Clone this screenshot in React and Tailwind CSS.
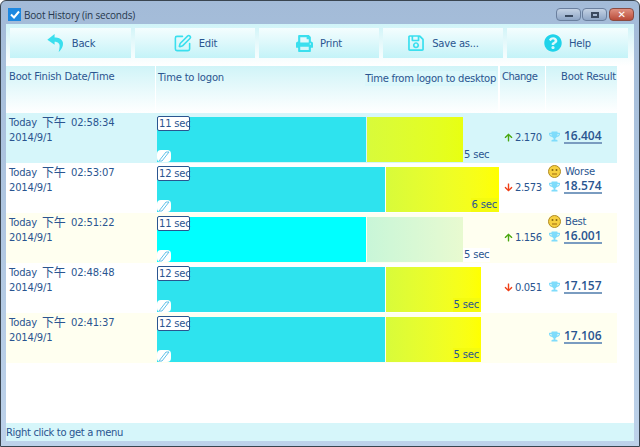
import React from "react";
import { FaTrophy, FaArrowUp, FaArrowDown, FaQuestionCircle, FaPrint, FaRegSave } from "react-icons/fa";
import { SquarePen } from "lucide-react";

const BackIcon = () => (
  <svg width="19" height="20" viewBox="0 0 20 22" className="text-[#3adfee]">
    <path d="M9 1 L1 7.5 L9 13 L9 9.5 C13 9.5 15 12 14.5 15 C14.2 17 14 19 13.5 21 C17 18 19 14 18 10 C17 6.5 13 5 9 5 Z" fill="currentColor" />
  </svg>
);

const Smiley = () => (
  <svg width="13" height="13" viewBox="0 0 13 13" className="shrink-0">
    <circle cx="6.5" cy="6.5" r="6" fill="#f6d040" stroke="#b08a20" />
    <circle cx="4.5" cy="5" r="1" fill="#8a6a10" />
    <circle cx="8.5" cy="5" r="1" fill="#8a6a10" />
    <path d="M4 9 H9" stroke="#a06a10" />
  </svg>
);

const Corner = () => (
  <div className="absolute left-0 bottom-0 w-[14px] h-[12px] bg-white rounded-sm flex items-center justify-center">
    <svg width="12" height="11" viewBox="0 0 12 11">
      <path d="M1 10 L8 1 M4 10 L11 1 M1 10 H4 M8 1 H11" stroke="#60c0e8" strokeWidth="1" fill="none" />
    </svg>
  </div>
);

const toolbar = [
  { label: "Back", icon: <BackIcon />, w: "w-[121px]" },
  { label: "Edit", icon: <SquarePen size={19} strokeWidth={2} className="text-[#3adfee]" />, w: "w-[120px]" },
  { label: "Print", icon: <FaPrint size={17} className="text-[#3adfee]" />, w: "w-[120px]" },
  { label: "Save as...", icon: <FaRegSave size={18} className="text-[#3adfee]" />, w: "w-[120px]" },
  { label: "Help", icon: <FaQuestionCircle size={18} className="text-[#1fd3ea]" />, w: "w-[121px]" },
];

const rows = [
  { time: "02:58:34", bg: "bg-[#d6f6fa]", logon: "11 sec", a: 209, b: 96, desk: "5 sec", inside: false, change: "2.170", up: true, score: "16.404", cyan: "bg-[#2ee3ee]", grad: "bg-gradient-to-r from-[#d8fb3a] to-[#e8ff10]" },
  { time: "02:53:07", bg: "bg-white", logon: "12 sec", a: 228, b: 113, desk: "6 sec", inside: true, change: "2.573", up: false, score: "18.574", note: "Worse", cyan: "bg-[#2ee3ee]", grad: "bg-gradient-to-r from-[#d8fb3a] to-[#ffff00]" },
  { time: "02:51:22", bg: "bg-[#fffff0]", logon: "11 sec", a: 209, b: 96, desk: "5 sec", inside: false, white: true, change: "1.156", up: true, score: "16.001", note: "Best", cyan: "bg-[#00ffff]", grad: "bg-gradient-to-r from-[#c8f6d8] to-[#e8fad0]" },
  { time: "02:48:48", bg: "bg-white", logon: "12 sec", a: 228, b: 95, desk: "5 sec", inside: true, change: "0.051", up: false, score: "17.157", cyan: "bg-[#2ee3ee]", grad: "bg-gradient-to-r from-[#d8fb3a] to-[#ffff00]" },
  { time: "02:41:37", bg: "bg-[#fffff0]", logon: "12 sec", a: 228, b: 95, desk: "5 sec", inside: true, score: "17.106", cyan: "bg-[#2ee3ee]", grad: "bg-gradient-to-r from-[#d8fb3a] to-[#ffff00]" },
];

const cols = "grid grid-cols-[150px_344px_46px_71px]";

export default function App() {
  return (
    <div className="w-[640px] h-[447px] overflow-hidden flex flex-col bg-gradient-to-b from-[#a3bbd8] to-[#bdd2ea] border border-[#3a4550] rounded-t-md text-[#2a5590] text-[10px] tracking-[-0.2px] whitespace-nowrap font-['DejaVu_Sans',sans-serif]">
      <div className="h-[23px] shrink-0 flex items-center pl-[7px] pr-[5px] pt-[4px] text-[#26384e]">
        <div className="w-[13px] h-[13px] bg-[#1e88e0] flex items-center justify-center text-white mr-[3px]">
          <svg width="10" height="9" viewBox="0 0 10 9"><path d="M1 4.5 L4 7.5 L9 1.5" stroke="white" strokeWidth="2" fill="none" /></svg>
        </div>
        <span className="text-[10px] tracking-[-0.2px] leading-none font-['Open_Sans',sans-serif]">Boot History (in seconds)</span>
        <div className="ml-auto flex items-center gap-[1px]">
          <div className="w-[25px] h-[13px] rounded-sm border border-[#6a7f9e] bg-gradient-to-b from-[#c4d2e4] to-[#8ea6c6] flex items-center justify-center"><div className="w-[8px] h-[2px] mt-[3px] bg-[#3a4a60]" /></div>
          <div className="w-[25px] h-[13px] rounded-sm border border-[#6a7f9e] bg-gradient-to-b from-[#c4d2e4] to-[#8ea6c6] flex items-center justify-center"><div className="w-[8px] h-[6px] border-2 border-[#3a4a60]" /></div>
          <div className="w-[25px] h-[13px] ml-[1px] rounded-sm border border-[#8a4a40] bg-gradient-to-b from-[#e09080] to-[#b84a38] flex items-center justify-center text-white text-[10px] font-bold leading-none">✕</div>
        </div>
      </div>
      <div className="flex-1 mx-[5px] mb-[5px] bg-white flex flex-col">
        <div className="h-[42px] shrink-0 flex items-start gap-[4px] pl-[4px] pt-[4px] bg-gradient-to-b from-[#d0f4f8] to-white">
          {toolbar.map((t) => (
            <div key={t.label} className={`${t.w} h-[30px] flex items-center justify-center gap-[7px] bg-gradient-to-b from-[#f4fdfe] to-[#c4f3f8]`}>
              {t.icon}
              <span>{t.label}</span>
            </div>
          ))}
        </div>
        <div className="flex-1 flex flex-col">
          <div className="h-[47px] shrink-0 flex w-[611px]">
            <div className="w-[149px] mr-[1px] bg-gradient-to-b from-[#d0f4f8] to-white pl-[3px] pt-[3px]">Boot Finish Date/Time</div>
            <div className="w-[342px] mr-[2px] pl-[2px] pt-[4px] bg-gradient-to-b from-[#d0f4f8] to-white flex justify-between items-start pr-[2px]">
              <span>Time to logon</span>
              <span className="mt-[1px] bg-[#dcf8fb] tracking-[-0.28px]">Time from logon to desktop</span>
            </div>
            <div className="w-[45px] mr-[1px] bg-gradient-to-b from-[#d0f4f8] to-white pl-[2px] pt-[3px] tracking-[-0.5px]">Change</div>
            <div className="flex-1 bg-gradient-to-b from-[#d0f4f8] to-white text-right pt-[3px] pr-[1px]">Boot Result</div>
          </div>
          {rows.map((r) => (
            <div key={r.time} className={`${cols} w-[611px] h-[50px] shrink-0 ${r.bg}`}>
              <div className="pl-[3px] pt-[1px]">
                <div className="flex items-center h-[16px]">
                  <span className="w-[33px]">Today</span>
                  <span className="font-['Noto_Sans_CJK_TC',sans-serif] text-[12px] leading-none w-[29px]">下午</span>
                  <span>{r.time}</span>
                </div>
                <div>2014/9/1</div>
              </div>
              <div className="relative pt-[4px] flex items-start ml-[1px]">
                <div className={`relative h-[45px] ${r.cyan} mr-[1px]`} style={{ width: r.a }}>
                  <div className="absolute left-0 -top-[1px] h-[15px] w-[33px] bg-white border border-[#2a5590] rounded-[2px] flex items-center pl-[1px] leading-none">{r.logon}</div>
                  <Corner />
                </div>
                <div className={`relative h-[45px] ${r.grad}`} style={{ width: r.b }}>
                  {r.inside && <span className="absolute right-[1px] bottom-0 leading-[14px] bg-[#f4fb10] px-[1px]">{r.desk}</span>}
                  {!r.inside && <span className={`absolute left-full bottom-0 leading-[14px] px-[1px] ${r.white ? "bg-white" : ""}`}>{r.desk}</span>}
                </div>
              </div>
              <div className="flex items-center gap-[2px] pl-[4px] -mt-[1px] tracking-[-0.4px]">
                {r.change && (r.up ? <FaArrowUp size={9} className="text-[#4aa810]" /> : <FaArrowDown size={9} className="text-[#f04018]" />)}
                {r.change && <span>{r.change}</span>}
              </div>
              <div className="pl-[2px] pt-[2px] flex flex-col">
                <div className="flex items-center gap-[4px] h-[13px]">
                  {r.note && <Smiley />}
                  {r.note && <span>{r.note}</span>}
                </div>
                <div className="flex items-center gap-[4px] pl-[1px] h-[17px]">
                  <FaTrophy size={11} className="text-[#7fdcfb]" />
                  <span className="text-[12px] font-semibold tracking-[0px] border-b-2 border-[#7a9cc0] leading-[13px] font-['Open_Sans',sans-serif]">{r.score}</span>
                </div>
              </div>
            </div>
          ))}
          <div className="mt-auto h-[18px] bg-[#d6f6fa] flex items-center tracking-[-0.35px]">Right click to get a menu</div>
        </div>
      </div>
    </div>
  );
}
